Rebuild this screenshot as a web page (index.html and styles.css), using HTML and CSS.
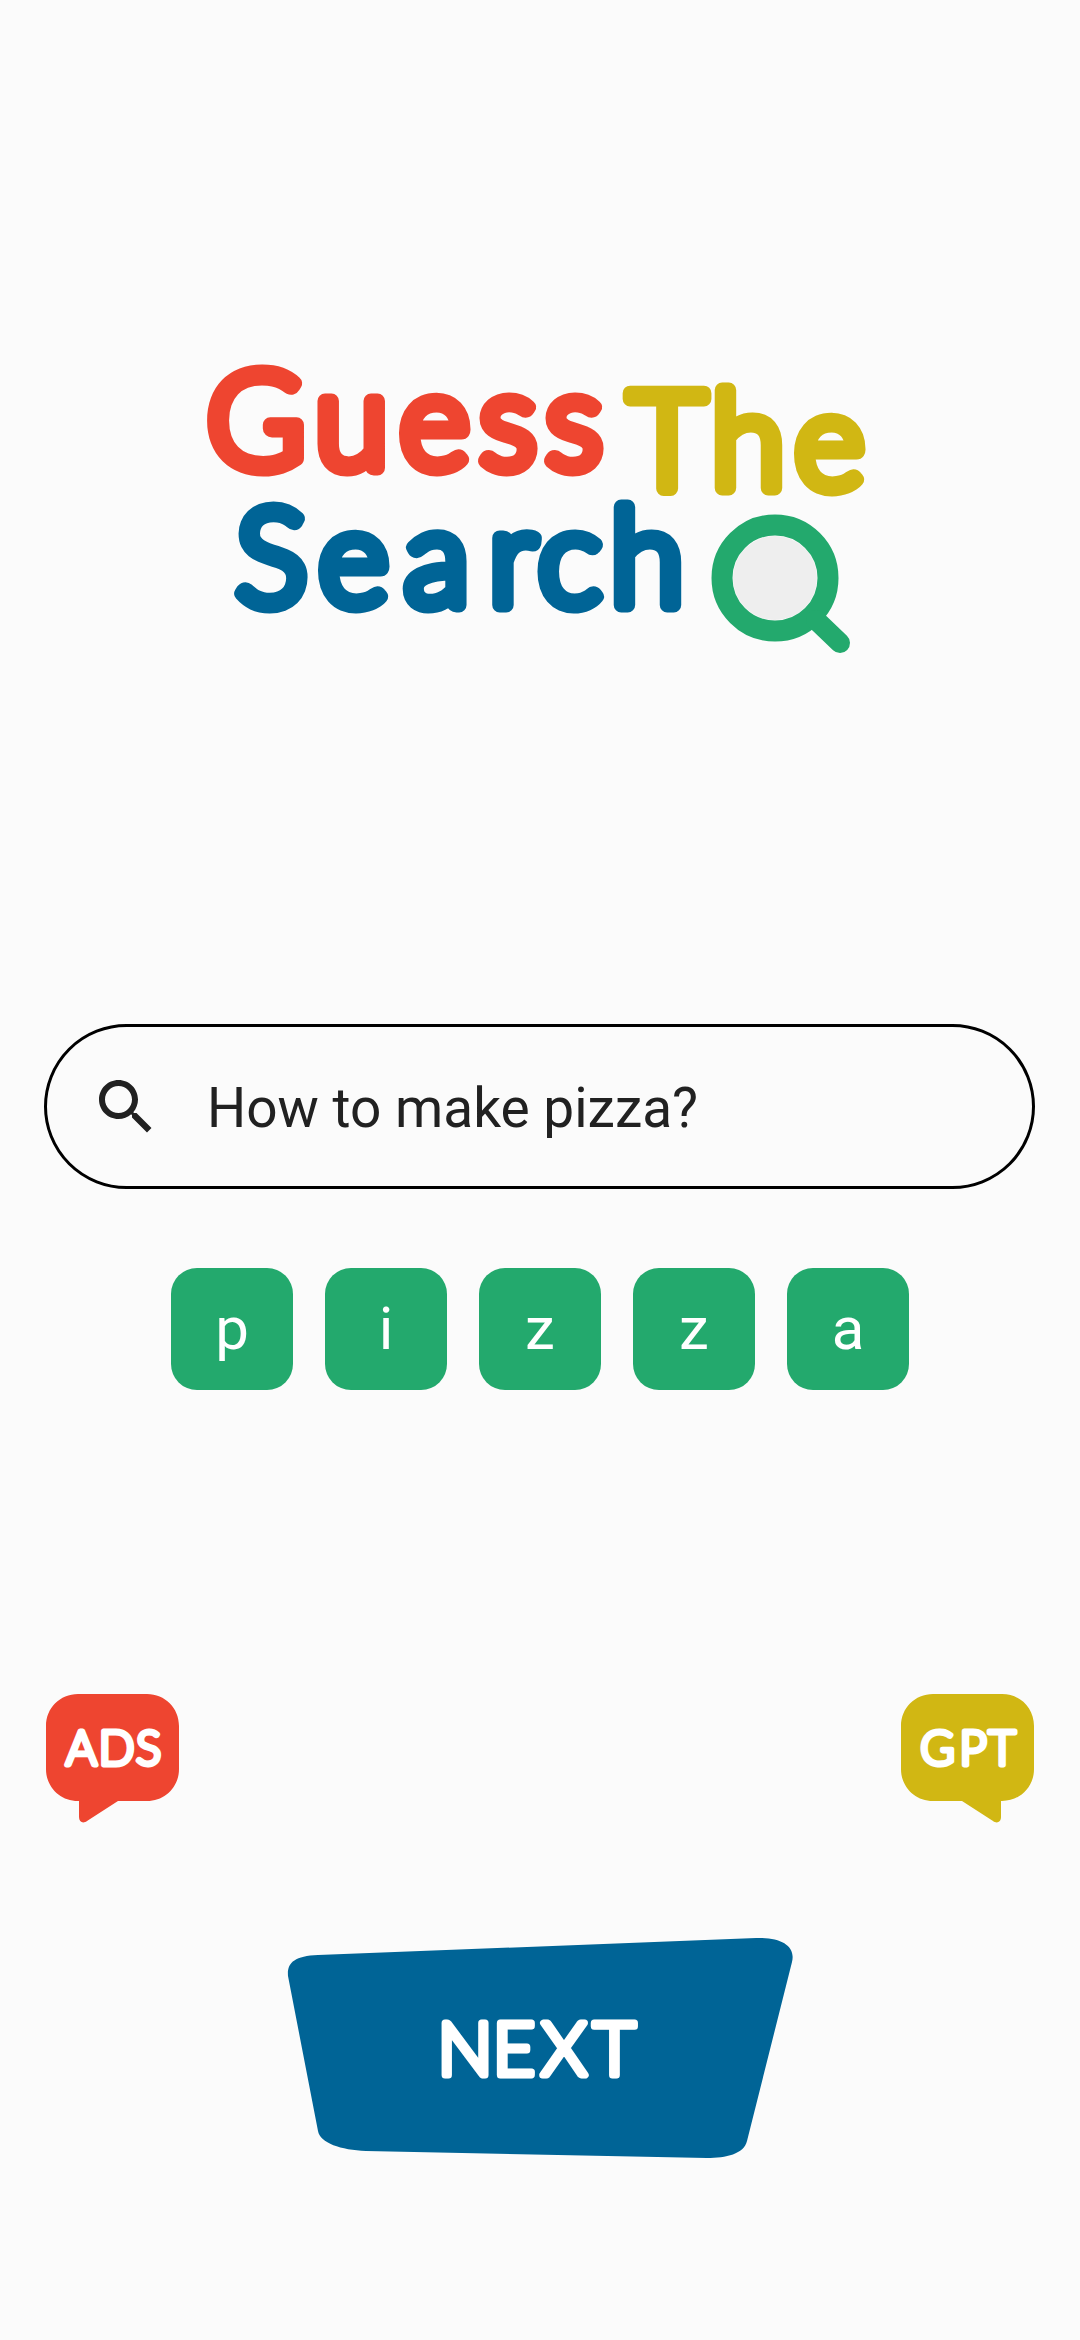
FILE: index.html
```html
<!DOCTYPE html>
<html lang="en">
<head>
    <meta charset="UTF-8">
    <meta name="viewport" content="width=device-width, initial-scale=1.0">
    <title>Guess The Search</title>
    <link rel="stylesheet" href="styles.css">
</head>
<body>
    <div class="page">
        <svg class="logo" viewBox="0 -20 720 350" width="720" height="350">
            <text class="logo-word red" x="76 171.5 254.5 328 394" y="128">Guess</text>
            <text class="logo-word yellow" x="487 568 649.5" y="148">The</text>
            <text class="logo-word blue" x="91.5 173.5 257 332.5 389.5 467" y="265">Search</text>
            <circle class="lens-glass" cx="595" cy="238" r="42"/>
            <circle class="lens-ring" cx="595" cy="238" r="53"/>
            <line class="lens-handle" x1="636" y1="280" x2="660" y2="303"/>
        </svg>

        <div class="search-box">
            <svg class="search-icon" viewBox="0 0 24 24" width="72" height="72">
                <path d="M15.5 14h-.79l-.28-.27C15.41 12.59 16 11.11 16 9.5 16 5.91 13.09 3 9.5 3S3 5.91 3 9.5 5.91 16 9.5 16c1.61 0 3.09-.59 4.23-1.57l.27.28v.79l5 4.99L20.49 19l-4.99-5zm-6 0C7.01 14 5 11.99 5 9.5S7.01 5 9.5 5 14 7.01 14 9.5 11.99 14 9.5 14z"/>
            </svg>
            <span class="search-text">How to make pizza?</span>
        </div>

        <div class="letters">
            <div class="letter">p</div>
            <div class="letter">i</div>
            <div class="letter">z</div>
            <div class="letter">z</div>
            <div class="letter">a</div>
        </div>

        <div class="helpers">
            <svg class="bubble" viewBox="0 0 133 132" width="133" height="132">
                <path class="red-fill" d="M32 0H101C119 0 133 14 133 32V75C133 93 119 107 101 107H72L41 127C37 130 33 128 33 123V107H32C14 107 0 93 0 75V32C0 14 14 0 32 0Z"/>
                <text class="bubble-label" x="35.5 70.5 102.5" y="71">ADS</text>
            </svg>
            <svg class="bubble" viewBox="0 0 133 132" width="133" height="132">
                <path class="yellow-fill" d="M32 0H101C119 0 133 14 133 32V75C133 93 119 107 101 107H100V123C100 128 96 130 92 127L61 107H32C14 107 0 93 0 75V32C0 14 14 0 32 0Z"/>
                <text class="bubble-label" x="36.5 72 101" y="71">GPT</text>
            </svg>
        </div>

        <div class="next-wrap">
            <svg class="next-btn" viewBox="0 0 508 225" width="508" height="225">
                <path class="blue-fill" d="M2 40C1 27 8 20 32 19L470 2C495 1 510 10 506 26L461 205C458 218 440 222 421 222L80 215C55 214 34 207 32 195Z"/>
                <text class="next-label" x="179 228 278 328.5" y="139">NEXT</text>
            </svg>
        </div>
    </div>
</body>
</html>
```

FILE: styles.css
```css
body {
    background-color: #fbfbfb;
    margin: 0;
    padding: 0;
    font-family: Roboto, sans-serif;
}
.page {
    width: 1080px;
    height: 2340px;
    padding-top: 320px;
    box-sizing: border-box;
    overflow: hidden;
}
.logo {
    display: block;
    margin: 0 auto;
}
.logo-word {
    font-family: Lato, sans-serif;
    font-size: 134px;
    font-weight: 300;
    text-anchor: middle;
    stroke-width: 15px;
    stroke-linejoin: round;
    stroke-linecap: round;
}
.red {
    fill: #ee4530;
    stroke: #ee4530;
}
.yellow {
    fill: #d1b713;
    stroke: #d1b713;
}
.blue {
    fill: #006496;
    stroke: #006496;
}
.red-fill {
    fill: #ee4530;
}
.yellow-fill {
    fill: #d1b713;
}
.blue-fill {
    fill: #006496;
}
.lens-glass {
    fill: #eeeeee;
}
.lens-ring {
    fill: none;
    stroke: #23a96d;
    stroke-width: 21px;
}
.lens-handle {
    stroke: #23a96d;
    stroke-width: 20px;
    stroke-linecap: round;
}
.search-box {
    display: flex;
    align-items: center;
    width: 991px;
    height: 165px;
    margin: 354px 0 0 44px;
    padding-left: 43px;
    box-sizing: border-box;
    border: 3px solid #000;
    border-radius: 83px;
}
.search-icon {
    fill: #212121;
    flex-shrink: 0;
    margin-right: 45px;
}
.search-text {
    font-size: 55px;
    padding-top: 2px;
    color: #212121;
}
.letters {
    display: flex;
    justify-content: center;
    gap: 32px;
    margin-top: 79px;
}
.letter {
    display: flex;
    align-items: center;
    justify-content: center;
    width: 122px;
    height: 122px;
    padding-bottom: 2px;
    box-sizing: border-box;
    border-radius: 26px;
    background-color: #23a96d;
    color: #fff;
    font-size: 60px;
    font-weight: 400;
}
.helpers {
    display: flex;
    justify-content: space-between;
    margin-top: 304px;
    padding: 0 46px;
}
.bubble {
    display: block;
}
.bubble-label {
    font-family: Lato, sans-serif;
    font-size: 47px;
    font-weight: 300;
    text-anchor: middle;
    fill: #fff;
    stroke: #fff;
    stroke-width: 5px;
    stroke-linejoin: round;
    stroke-linecap: round;
}
.next-wrap {
    display: flex;
    justify-content: center;
    margin-top: 110px;
}
.next-btn {
    display: block;
}
.next-label {
    font-family: Lato, sans-serif;
    font-size: 73px;
    font-weight: 300;
    text-anchor: middle;
    fill: #fff;
    stroke: #fff;
    stroke-width: 7px;
    stroke-linejoin: round;
    stroke-linecap: round;
}
```
